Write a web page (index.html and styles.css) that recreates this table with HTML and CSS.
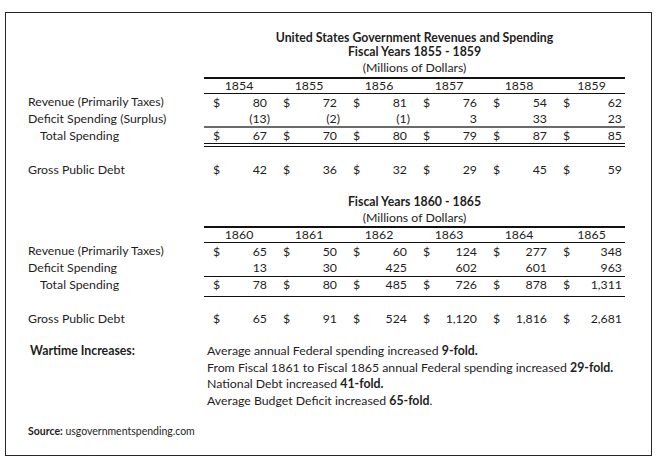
FILE: index.html
```html
<!DOCTYPE html>
<html>
<head>
<meta charset="utf-8">
<link rel="stylesheet" href="styles.css">
</head>
<body>
<div class="frame">
  <section class="block first">
    <div class="row heading">
      <div class="label"></div>
      <div class="titles">
        <div class="t-bold">United States Government Revenues and Spending</div>
        <div class="t-bold">Fiscal Years 1855 - 1859</div>
        <div class="t-plain">(Millions of Dollars)</div>
      </div>
    </div>
    <div class="row years">
      <div class="label"></div>
      <div class="cells">
        <div class="yr">1854</div><div class="yr">1855</div><div class="yr">1856</div><div class="yr">1857</div><div class="yr">1858</div><div class="yr last">1859</div>
      </div>
    </div>
    <div class="row r-rev">
      <div class="label">Revenue (Primarily Taxes)</div>
      <div class="cells">
        <div class="c"><span>$</span><span>80</span></div><div class="c"><span>$</span><span>72</span></div><div class="c"><span>$</span><span>81</span></div><div class="c"><span>$</span><span>76</span></div><div class="c"><span>$</span><span>54</span></div><div class="c last"><span>$</span><span>62</span></div>
      </div>
    </div>
    <div class="row r-def">
      <div class="label">Deficit Spending (Surplus)</div>
      <div class="cells gray-under">
        <div class="c"><span></span><span class="paren">(13)</span></div><div class="c"><span></span><span class="paren">(2)</span></div><div class="c"><span></span><span class="paren">(1)</span></div><div class="c"><span></span><span>3</span></div><div class="c"><span></span><span>33</span></div><div class="c last"><span></span><span>23</span></div>
      </div>
    </div>
    <div class="row r-tot">
      <div class="label indent">Total Spending</div>
      <div class="cells double-under">
        <div class="c"><span>$</span><span>67</span></div><div class="c"><span>$</span><span>70</span></div><div class="c"><span>$</span><span>80</span></div><div class="c"><span>$</span><span>79</span></div><div class="c"><span>$</span><span>87</span></div><div class="c last"><span>$</span><span>85</span></div>
      </div>
    </div>
    <div class="row r-debt">
      <div class="label">Gross Public Debt</div>
      <div class="cells">
        <div class="c"><span>$</span><span>42</span></div><div class="c"><span>$</span><span>36</span></div><div class="c"><span>$</span><span>32</span></div><div class="c"><span>$</span><span>29</span></div><div class="c"><span>$</span><span>45</span></div><div class="c last"><span>$</span><span>59</span></div>
      </div>
    </div>
  </section>

  <section class="block second">
    <div class="row heading">
      <div class="label"></div>
      <div class="titles">
        <div class="t-bold">Fiscal Years 1860 - 1865</div>
        <div class="t-plain">(Millions of Dollars)</div>
      </div>
    </div>
    <div class="row years">
      <div class="label"></div>
      <div class="cells">
        <div class="yr">1860</div><div class="yr">1861</div><div class="yr">1862</div><div class="yr">1863</div><div class="yr">1864</div><div class="yr last">1865</div>
      </div>
    </div>
    <div class="row r-rev">
      <div class="label">Revenue (Primarily Taxes)</div>
      <div class="cells">
        <div class="c"><span>$</span><span>65</span></div><div class="c"><span>$</span><span>50</span></div><div class="c"><span>$</span><span>60</span></div><div class="c"><span>$</span><span>124</span></div><div class="c"><span>$</span><span>277</span></div><div class="c last"><span>$</span><span>348</span></div>
      </div>
    </div>
    <div class="row r-def">
      <div class="label">Deficit Spending</div>
      <div class="cells thin-under">
        <div class="c"><span></span><span>13</span></div><div class="c"><span></span><span>30</span></div><div class="c"><span></span><span>425</span></div><div class="c"><span></span><span>602</span></div><div class="c"><span></span><span>601</span></div><div class="c last"><span></span><span>963</span></div>
      </div>
    </div>
    <div class="row r-tot2">
      <div class="label indent">Total Spending</div>
      <div class="cells thin-under">
        <div class="c"><span>$</span><span>78</span></div><div class="c"><span>$</span><span>80</span></div><div class="c"><span>$</span><span>485</span></div><div class="c"><span>$</span><span>726</span></div><div class="c"><span>$</span><span>878</span></div><div class="c last"><span>$</span><span>1,311</span></div>
      </div>
    </div>
    <div class="row r-debt2">
      <div class="label">Gross Public Debt</div>
      <div class="cells">
        <div class="c"><span>$</span><span>65</span></div><div class="c"><span>$</span><span>91</span></div><div class="c"><span>$</span><span>524</span></div><div class="c"><span>$</span><span>1,120</span></div><div class="c"><span>$</span><span>1,816</span></div><div class="c last"><span>$</span><span>2,681</span></div>
      </div>
    </div>
  </section>

  <section class="notes">
    <div class="notes-label">Wartime Increases:</div>
    <div class="notes-list">
      <div>Average annual Federal spending increased <b>9-fold.</b></div>
      <div>From Fiscal 1861 to Fiscal 1865 annual Federal spending increased <b>29-fold.</b></div>
      <div>National Debt increased <b>41-fold.</b></div>
      <div>Average Budget Deficit increased <b>65-fold</b>.</div>
    </div>
  </section>

  <div class="source"><b>Source:</b> usgovernmentspending.com</div>
</div>
</body>
</html>
```

FILE: styles.css
```css
html, body {
  margin: 0;
  padding: 0;
  background: #ffffff;
}

body {
  font-family: Lato, "Open Sans", "Liberation Sans", sans-serif;
  font-size: 12.3px;
  color: #1e1e1e;
}

.frame {
  margin: 12px 0 0 5px;
  width: 645px;
  height: 442px;
  border: 1px solid #262626;
  display: flex;
  flex-direction: column;
}

.block.first {
  padding-top: 17px;
}

.block.second {
  padding-top: 16px;
}

.row {
  display: flex;
}

.label {
  width: 176px;
  flex: none;
  padding-left: 22px;
  white-space: nowrap;
  line-height: 16px;
}

.label.indent {
  padding-left: 34px;
  width: 164px;
}

.titles {
  width: 421px;
  text-align: center;
  line-height: 15px;
  padding-bottom: 2px;
}

.second .titles {
  padding-bottom: 0;
  line-height: 16px;
}

.t-bold {
  font-weight: bold;
}

.first .titles .t-bold + .t-bold {
  margin-top: -1px;
}

.t-plain {
  padding-top: 1px;
}

.second .t-plain {
  padding-top: 0;
}

.cells {
  width: 421px;
  display: flex;
}

.years .cells {
  border-top: 2px solid #111;
  border-bottom: 1px solid #111;
}

.yr {
  width: 70px;
  text-align: center;
  line-height: 14px;
}

.yr.last {
  width: 71px;
  padding-left: 4px;
  box-sizing: border-box;
}

.c {
  width: 70px;
  box-sizing: border-box;
  display: flex;
  justify-content: space-between;
  padding: 0 7px 0 9px;
  line-height: 16px;
}

.c.last {
  width: 71px;
  padding-right: 3px;
}

.paren {
  margin-right: -3px;
}

.r-rev .c {
  line-height: 17px;
}

.r-def .c,
.r-def .label {
  line-height: 15px;
}

.gray-under {
  border-bottom: 2px solid #6a6a6a;
}

.double-under {
  border-bottom: 4px double #111;
}

.r-tot .c,
.r-tot .label {
  line-height: 15px;
}

.r-debt {
  margin-top: 15px;
}

.second .r-def .c,
.second .r-def .label {
  line-height: 16px;
}

.thin-under {
  border-bottom: 1px solid #111;
}

.r-tot2 .c,
.r-tot2 .label {
  line-height: 16px;
}

.r-tot2 .cells {
  padding-bottom: 3px;
}

.r-debt2 {
  margin-top: 14px;
}

.notes {
  display: flex;
  margin-top: 16px;
  line-height: 16.7px;
}

.notes-label {
  width: 177px;
  flex: none;
  padding-left: 24px;
  font-weight: bold;
}

.notes-list b {
  font-weight: bold;
}

.source {
  margin-top: 15px;
  padding-left: 22px;
  font-size: 10.5px;
}
```
